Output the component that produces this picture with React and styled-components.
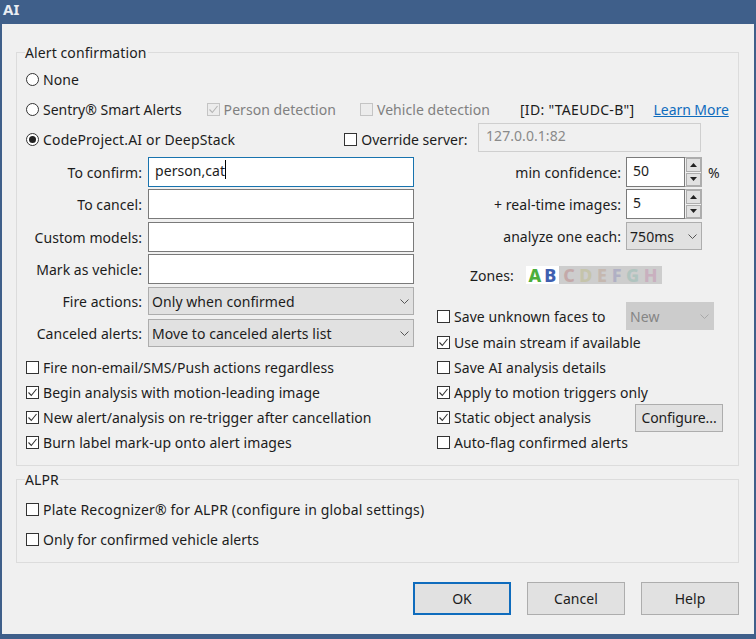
import React from "react";
import styled, { createGlobalStyle } from "styled-components";

const Global = createGlobalStyle`
  html, body { margin: 0; padding: 0; background: #3f5f8a; }
  body { font-family: "Noto Sans", "Open Sans", Arial, sans-serif; font-size: 14px; color: #1c1c1c; letter-spacing: 0.06px; }
  * { box-sizing: border-box; }
`;

const Win = styled.div`
  width: 756px; height: 639px; background: #3f5f8a;
  padding: 0 2px 5px 2px; display: flex; flex-direction: column; overflow: hidden;
`;
const TitleBar = styled.div`
  height: 24px; flex: none; margin-left: 1px; color: #e9edf3;
  font: 700 15px/18px "Noto Sans", sans-serif;
`;
const Client = styled.div`
  flex: 1; background: #f0f0f0; padding: 18px 15px 0 14px; display: flex; flex-direction: column;
`;
const Group = styled.fieldset`
  margin: 0 0 ${p => p.$mb || 0}px; min-width: 0; border: 1px solid #dcdcdc;
  padding: ${p => p.$pt}px 15px ${p => p.$pb}px 9px;
`;
const Legend = styled.legend`
  padding: 0 1px 0 0; margin-left: -1px; line-height: 22px; height: 20px; background: #f0f0f0; letter-spacing: 0.1px;
`;
const Row = styled.div`
  display: flex; align-items: center; height: ${p => p.$h || 25}px; white-space: nowrap;
  margin-top: ${p => p.$mt || 0}px;
`;
const Muted = styled.span`color: #808080; letter-spacing: 0.05px;`;
const Tight = styled.span`letter-spacing: 0;`;
const Wide = styled.span`letter-spacing: 0.16px;`;
const Tick = styled.span`
  flex: none; width: 13px; height: 13px; border: 1px solid ${p => p.$off ? "#c4c4c4" : "#333"};
  background: ${p => p.$off ? "#ececec" : "#fff"}; display: flex; align-items: center; justify-content: center;
  margin-right: 4px; margin-left: ${p => p.$ml || 0}px;
`;
const Dot = styled.span`
  flex: none; width: 13px; height: 13px; border: 1px solid #333; border-radius: 50%; background: #fff;
  display: flex; align-items: center; justify-content: center; margin-right: 4px;
  &::after { content: ""; display: ${p => p.$on ? "block" : "none"}; width: 7px; height: 7px; border-radius: 50%; background: #222; }
`;
const IdText = styled.span`margin-left: ${p => p.$ml}px; letter-spacing: 0.3px;`;
const Link = styled.a`color: #0f6cbd; text-decoration: underline; margin-left: ${p => p.$ml}px; letter-spacing: -0.05px;`;
const ServerBox = styled.div`
  width: 223px; height: 29px; margin-left: auto; margin-right: 22px; margin-top: -3px; border: 1px solid #cfcfcf; background: #f0f0f0;
  color: #8a8a8a; padding-left: 7px; line-height: 24px;
`;
const Columns = styled.div`
  display: grid; grid-template-columns: 388px 286px; column-gap: 23px; margin-top: 3px;
`;
const Col = styled.div`display: flex; flex-direction: column;`;
const FieldRow = styled.div`
  display: flex; align-items: center; height: ${p => p.$h || 30}px; margin-top: ${p => p.$mt || 0}px; white-space: nowrap;
`;
const FieldLabel = styled.span`
  flex: none; width: ${p => p.$w}px; margin-right: ${p => p.$gap}px; text-align: right;
`;
const TextBox = styled.div`
  width: 266px; height: 30px; background: #fff; border: 1px solid ${p => p.$focus ? "#1873ae" : "#7a7a7a"};
  padding-left: 6px; line-height: 25px; display: flex; align-items: flex-start;
`;
const Caret = styled.span`
  display: block; width: 1px; height: 19px; margin-top: 2px; background: #000;
`;
const Combo = styled.div`
  flex: none; width: ${p => p.$w}px; height: ${p => p.$h || 28}px; display: flex; align-items: center; justify-content: space-between;
  background: ${p => p.$off ? "#cccccc" : "#e1e1e1"}; border: 1px solid ${p => p.$off ? "#cccccc" : "#adadad"};
  color: ${p => p.$off ? "#858585" : "#1c1c1c"}; padding: 0 4px 0 3px;
  margin-left: ${p => p.$pushed ? "auto" : "0"}; margin-right: ${p => p.$pushed ? "9px" : "0"};
`;
const Spin = styled.div`
  flex: none; width: 76px; height: 30px; display: flex; border: 1px solid #adadad; background: #f0f0f0;
`;
const SpinText = styled.div`
  width: 59px; margin: -1px 0 -1px -1px; background: #fff; border: 1px solid #7a7a7a; padding-left: 6px; line-height: 25px;
`;
const SpinArrows = styled.div`
  flex: 1; display: flex; flex-direction: column; gap: 1px; padding: 0 0 0 1px;
`;
const SpinBtn = styled.div`
  flex: 1; background: #e1e1e1; border: 1px solid #adadad; display: flex; align-items: center; justify-content: center;
`;
const Unit = styled.span`margin-left: 6px;`;
const ZonesLabel = styled.span`margin-left: 33px; margin-right: 12px;`;
const Zones = styled.div`
  display: flex; height: 18px; font: 800 18px/18px "Noto Sans", sans-serif; letter-spacing: 0;
`;
const ZoneOn = styled.div`
  width: 33px; background: #fff; display: flex; justify-content: space-around; padding: 0 1px;
`;
const ZoneOff = styled.div`
  width: 103px; background: #cdcdcd; display: flex; justify-content: space-around; padding: 0 2px;
`;
const Z = styled.span`color: ${p => p.$c}; opacity: ${p => p.$dim ? 0.3 : 1};`;
const MiniBtn = styled.div`
  width: 88px; height: 28px; margin-left: auto; background: #e1e1e1; border: 1px solid #adadad;
  text-align: center; line-height: 25px; flex: none; letter-spacing: -0.1px;
`;
const Footer = styled.div`
  display: flex; justify-content: flex-end; gap: 16px; margin-top: 19px;
`;
const Btn = styled.div`
  width: 98px; height: 33px; background: #e1e1e1; display: flex; align-items: center; justify-content: center;
  border: ${p => p.$def ? "2px solid #0f6cbd" : "1px solid #adadad"};
`;

const CheckMark = ({ off }) => (
  <svg width="11" height="11" viewBox="0 0 11 11"><path d="M1.5 5.5 L4.3 8.5 L9.5 2" fill="none" stroke={off ? "#b5b5b5" : "#333"} strokeWidth="1.1" /></svg>
);
const Check = ({ on, off, ml, children }) => (
  <>
    <Tick $off={off} $ml={ml}>{on && <CheckMark off={off} />}</Tick>
    {children}
  </>
);
const Chevron = ({ c = "#555" }) => (
  <svg width="9" height="5" viewBox="0 0 9 5"><path d="M0.5 0.5 L4.5 4.5 L8.5 0.5" fill="none" stroke={c} strokeWidth="1" /></svg>
);
const Tri = ({ up }) => (
  <svg width="7" height="4" viewBox="0 0 7 4"><path d={up ? "M3.5 0 L7 4 L0 4 Z" : "M0 0 L7 0 L3.5 4 Z"} fill="#222" /></svg>
);
const Spinner = ({ v }) => (
  <Spin>
    <SpinText>{v}</SpinText>
    <SpinArrows>
      <SpinBtn><Tri up /></SpinBtn>
      <SpinBtn><Tri /></SpinBtn>
    </SpinArrows>
  </Spin>
);
const Field = ({ label, mt, h, children }) => (
  <FieldRow $mt={mt} $h={h}>
    <FieldLabel $w={116} $gap={6}>{label}</FieldLabel>
    {children}
  </FieldRow>
);
const RField = ({ label, mt, h, children }) => (
  <FieldRow $mt={mt} $h={h}>
    <FieldLabel $w={184} $gap={5}>{label}</FieldLabel>
    {children}
  </FieldRow>
);

export default function App() {
  return (
    <Win>
      <Global />
      <TitleBar>AI</TitleBar>
      <Client>
        <Group $pt={2} $pb={10} $mb={3}>
          <Legend>Alert confirmation</Legend>
          <Row $h={30}><Dot />None</Row>
          <Row $h={30}>
            <Dot /><Tight>Sentry® Smart Alerts</Tight>
            <Check on off ml={25}><Muted>Person detection</Muted></Check>
            <Check off ml={24}><Muted>Vehicle detection</Muted></Check>
            <IdText $ml={30}>[ID: "TAEUDC-B"]</IdText>
            <Link $ml={19}>Learn More</Link>
          </Row>
          <Row $h={30}>
            <Dot $on /><Wide>CodeProject.AI or DeepStack</Wide>
            <Check ml={109}><Tight>Override server:</Tight></Check>
            <ServerBox>127.0.0.1:82</ServerBox>
          </Row>
          <Columns>
            <Col>
              <Field label="To confirm:"><TextBox $focus>person,cat<Caret /></TextBox></Field>
              <Field label="To cancel:" mt={2}><TextBox /></Field>
              <Field label="Custom models:" mt={3}><TextBox /></Field>
              <Field label="Mark as vehicle:" mt={2}><TextBox /></Field>
              <Field label="Fire actions:" mt={3} h={28}><Combo $w={266}>Only when confirmed<Chevron /></Combo></Field>
              <Field label="Canceled alerts:" mt={4} h={28}><Combo $w={266}>Move to canceled alerts list<Chevron /></Combo></Field>
              <Row $mt={8}><Check>Fire non-email/SMS/Push actions regardless</Check></Row>
              <Row><Check on>Begin analysis with motion-leading image</Check></Row>
              <Row><Check on>New alert/analysis on re-trigger after cancellation</Check></Row>
              <Row><Check on>Burn label mark-up onto alert images</Check></Row>
            </Col>
            <Col>
              <RField label="min confidence:"><Spinner v="50" /><Unit>%</Unit></RField>
              <RField label="+ real-time images:" mt={2}><Spinner v="5" /></RField>
              <RField label="analyze one each:" mt={3} h={28}><Combo $w={76}>750ms<Chevron /></Combo></RField>
              <Row $h={18} $mt={16}>
                <ZonesLabel>Zones:</ZonesLabel>
                <Zones>
                  <ZoneOn><Z $c="#4cae3c">A</Z><Z $c="#3f5fb0">B</Z></ZoneOn>
                  <ZoneOff>
                    <Z $dim $c="#b05a5a">C</Z><Z $dim $c="#b5b060">D</Z><Z $dim $c="#b58a70">E</Z><Z $dim $c="#7070b0">F</Z>
                    <Z $dim $c="#70b0a0">G</Z><Z $dim $c="#c070a0">H</Z>
                  </ZoneOff>
                </Zones>
              </Row>
              <Row $h={28} $mt={18}>
                <Check>Save unknown faces to</Check>
                <Combo $off $pushed $w={88}>New<Chevron c="#a8a8a8" /></Combo>
              </Row>
              <Row><Check on>Use main stream if available</Check></Row>
              <Row><Check>Save AI analysis details</Check></Row>
              <Row><Check on>Apply to motion triggers only</Check></Row>
              <Row><Check on>Static object analysis</Check><MiniBtn>Configure...</MiniBtn></Row>
              <Row><Check>Auto-flag confirmed alerts</Check></Row>
            </Col>
          </Columns>
        </Group>
        <Group $pt={5} $pb={8}>
          <Legend>ALPR</Legend>
          <Row $h={30}><Check><Wide>Plate Recognizer® for ALPR (configure in global settings)</Wide></Check></Row>
          <Row $h={30}><Check>Only for confirmed vehicle alerts</Check></Row>
        </Group>
        <Footer>
          <Btn $def>OK</Btn>
          <Btn>Cancel</Btn>
          <Btn>Help</Btn>
        </Footer>
      </Client>
    </Win>
  );
}
